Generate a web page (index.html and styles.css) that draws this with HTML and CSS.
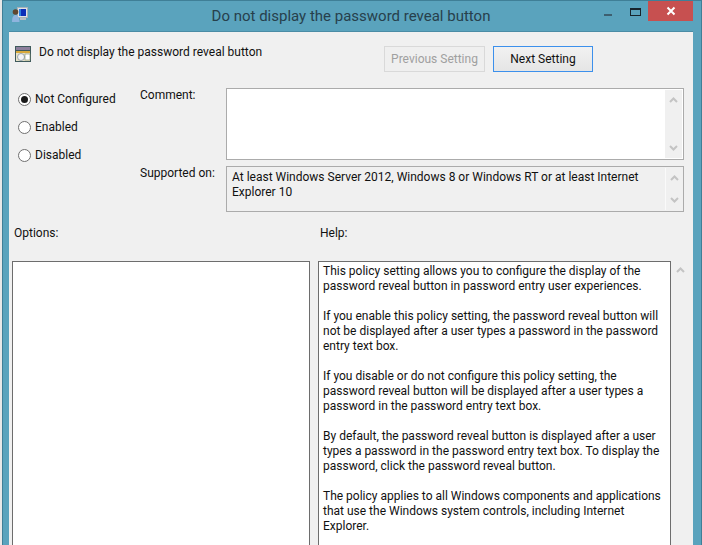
FILE: index.html
```html
<!DOCTYPE html>
<html lang="en">
<head>
<meta charset="utf-8">
<title>Do not display the password reveal button</title>
<link rel="stylesheet" href="styles.css">
</head>
<body>
<div class="window">
  <header class="titlebar">
    <svg class="app-icon" width="16" height="16" viewBox="0 0 16 16">
      <rect x="5.500" y="0.500" width="10" height="10" fill="#dfe3e6" stroke="#a9b2b8"/>
      <rect x="7" y="2" width="7" height="7" fill="#0d2fb8"/>
      <rect x="7" y="2" width="2" height="7" fill="#2a7fe0"/>
      <rect x="8" y="11" width="6" height="2" fill="#b8bec4"/>
      <circle cx="3.500" cy="5" r="2.800" fill="#5f4630"/>
      <path d="M0 15c0-5 1.500-7 3.500-7s4 2 4 7z" fill="#8fb4de"/>
    </svg>
    <h1 class="title">Do not display the password reveal button</h1>
    <div class="caption">
      <span class="min"></span>
      <span class="max"></span>
      <span class="close">
        <svg width="10" height="10" viewBox="0 0 10 10"><path d="M1.500 1.500l7 7M8.500 1.500l-7 7" stroke="#fff" stroke-width="2"/></svg>
      </span>
    </div>
  </header>
  <main class="client">
    <div class="head-row">
      <svg class="policy-icon" width="16" height="16" viewBox="0 0 16 16">
        <rect width="16" height="16" fill="#3f5a5c"/>
        <rect x="1" y="1" width="14" height="3" fill="#8d7f9c"/>
        <rect x="1" y="5" width="14" height="10" fill="#e9e3c8"/>
        <rect x="1" y="5" width="14" height="2" fill="#d8a93a"/>
        <circle cx="6" cy="11" r="3.500" fill="#f4f4f4" stroke="#9aa5ad"/>
        <rect x="10" y="8" width="5" height="6" fill="#fff" stroke="#7d8a6a" stroke-width=".6"/>
      </svg>
      <span class="heading">Do not display the password reveal button</span>
      <div class="nav">
        <button class="btn btn-disabled" type="button">Previous Setting</button>
        <button class="btn btn-focus" type="button">Next Setting</button>
      </div>
    </div>
    <div class="settings">
      <div class="radios">
        <label class="radio"><span class="dot dot-on"></span>Not Configured</label>
        <label class="radio"><span class="dot"></span>Enabled</label>
        <label class="radio"><span class="dot"></span>Disabled</label>
      </div>
      <div class="fields">
        <span class="field-label">Comment:</span>
        <div class="box box-comment">
          <div class="box-text"></div>
          <div class="scroll">
            <svg class="arrow" width="9" height="6" viewBox="0 0 9 6"><path d="M1 5l3.500-3.500L8 5" fill="none" stroke="#c4c4c4" stroke-width="2"/></svg>
            <svg class="arrow" width="9" height="6" viewBox="0 0 9 6"><path d="M1 1l3.500 3.500L8 1" fill="none" stroke="#c4c4c4" stroke-width="2"/></svg>
          </div>
        </div>
        <span class="field-label">Supported on:</span>
        <div class="box box-support">
          <div class="box-text">At least Windows Server 2012, Windows 8 or Windows RT or at least Internet Explorer 10</div>
          <div class="scroll">
            <svg class="arrow" width="9" height="6" viewBox="0 0 9 6"><path d="M1 5l3.500-3.500L8 5" fill="none" stroke="#c4c4c4" stroke-width="2"/></svg>
            <svg class="arrow" width="9" height="6" viewBox="0 0 9 6"><path d="M1 1l3.500 3.500L8 1" fill="none" stroke="#c4c4c4" stroke-width="2"/></svg>
          </div>
        </div>
      </div>
    </div>
    <div class="pane-labels">
      <span class="options-label">Options:</span>
      <span>Help:</span>
    </div>
    <div class="panes">
      <div class="pane options"></div>
      <div class="pane help">
        <p>This policy setting allows you to configure the display of the password reveal button in password entry user experiences.</p>
        <p>If you enable this policy setting, the password reveal button will not be displayed after a user types a password in the password entry text box.</p>
        <p>If you disable or do not configure this policy setting, the password reveal button will be displayed after a user types a password in the password entry text box.</p>
        <p>By default, the password reveal button is displayed after a user types a password in the password entry text box. To display the password, click the password reveal button.</p>
        <p>The policy applies to all Windows components and applications that use the Windows system controls, including Internet Explorer.</p>
      </div>
      <div class="help-scroll">
        <svg class="arrow" width="9" height="6" viewBox="0 0 9 6"><path d="M1 5l3.500-3.500L8 5" fill="none" stroke="#c4c4c4" stroke-width="2"/></svg>
      </div>
    </div>
  </main>
</div>
</body>
</html>
```
FILE: styles.css
```css
* { box-sizing: border-box; }
html, body { margin: 0; height: 100%; background: #e8e8e8; overflow: hidden; }
body { padding-left: 2px; font-family: Roboto, "Noto Sans", sans-serif; font-size: 12px; line-height: 15px; color: #111; }
.window { width: 700px; height: 545px; background: #5aa3bd; border: 1px solid #3f7f97; border-bottom: 0; padding: 0 8px 0 6px; overflow: hidden; }
.titlebar { height: 30px; display: flex; align-items: center; position: relative; }
.app-icon { margin: -2px 0 0 3px; flex: none; }
.title { position: absolute; left: 0; right: 0; top: 5px; margin: 0; text-align: center; font-weight: 400; font-size: 15px; line-height: 20px; color: #27404c; }
.caption { margin-left: auto; display: flex; align-items: flex-start; height: 100%; position: relative; }
.min { width: 8px; height: 2px; background: #3d5f70; margin: 13px 18px 0 0; }
.max { width: 11px; height: 8px; border: 1px solid #17242c; border-top-width: 2px; margin: 7px 7px 0 0; }
.close { width: 45px; height: 20px; background: #c75050; display: flex; align-items: center; justify-content: center; }
.client { height: 520px; background: #f0f0f0; border-top: 1px solid #4a8ca5; overflow: hidden; }
.head-row { display: flex; align-items: flex-start; padding: 13px 0 0 6px; height: 56px; }
.policy-icon { flex: none; margin-top: 1px; }
.heading { margin-left: 8px; white-space: nowrap; }
.nav { margin-left: auto; margin-right: 100px; display: flex; gap: 8px; margin-top: 1px; }
.btn { width: 101px; height: 26px; padding: 1px 0 0; font: inherit; border: 1px solid #3c90ec; background: linear-gradient(#f1f1f1, #e5e5e5); color: #111; }
.btn-focus { width: 100px; }
.btn-disabled { border-color: #d9d9d9; background: #efefef; color: #a0a0a0; }
.settings { display: flex; height: 125px; }
.radios { width: 131px; padding: 4px 0 0 9px; display: flex; flex-direction: column; gap: 13px; flex: none; }
.radio { display: flex; align-items: center; height: 15px; gap: 4px; }
.dot { width: 13px; height: 13px; border-radius: 50%; border: 1px solid #707070; background: #fff; flex: none; position: relative; }
.dot-on::after { content: ""; position: absolute; left: 2px; top: 2px; width: 7px; height: 7px; border-radius: 50%; background: #1a1a1a; }
.fields { display: grid; grid-template-columns: 86px 458px; grid-template-rows: 72px 46px; row-gap: 6px; align-content: start; }
.field-label { white-space: nowrap; }
.box { border: 1px solid #ababab; display: flex; background: #fff; }
.box-support { background: #f0f0f0; }
.box-text { flex: 1; padding: 3px 5px; }
.scroll { width: 17px; margin: 1px; background: #f0f0f0; display: flex; flex-direction: column; justify-content: space-between; align-items: center; padding: 7px 0; }
.box-support .scroll { border-left: 1px solid #fafafa; }
.pane-labels { display: flex; padding: 0 0 0 5px; height: 35px; margin-top: 13px; }
.options-label { width: 306px; }
.panes { display: flex; padding-left: 3px; }
.pane { height: 300px; background: #fff; }
.options { width: 298px; border: 1px solid #6d6d6d; }
.help { width: 353px; margin-left: 8px; border: 1px solid #6d6d6d; padding: 2px 4px; }
.help p { margin: 0 0 15px; }
.help-scroll { width: 20px; padding: 6px 0 0 5px; }
.arrow { display: block; flex: none; }
```
